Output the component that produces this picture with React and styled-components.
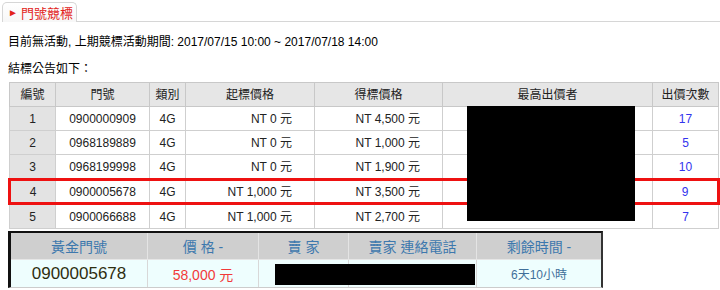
import React from 'react';
import styled, { createGlobalStyle } from 'styled-components';

const GlobalStyle = createGlobalStyle`
  body {
    margin: 0;
    background: #fff;
    font-family: "Liberation Sans", "Noto Sans CJK TC", sans-serif;
    font-size: 12px;
    color: #000;
  }
`;

const rows = [
  { no: 1, phone: '0900000909', type: '4G', start: 'NT 0 元', win: 'NT 4,500 元', bids: 17 },
  { no: 2, phone: '0968189889', type: '4G', start: 'NT 0 元', win: 'NT 1,000 元', bids: 5 },
  { no: 3, phone: '0968199998', type: '4G', start: 'NT 0 元', win: 'NT 1,900 元', bids: 10 },
  { no: 4, phone: '0900005678', type: '4G', start: 'NT 1,000 元', win: 'NT 3,500 元', bids: 9, hot: true },
  { no: 5, phone: '0900066688', type: '4G', start: 'NT 1,000 元', win: 'NT 2,700 元', bids: 7 },
];

function App() {
  return (
    <Page>
      <GlobalStyle />
      <TabBar>
        <Tab>
          <Arrow>►</Arrow>門號競標
        </Tab>
        <TabLine />
      </TabBar>
      <Content>
        <Info>目前無活動, 上期競標活動期間: 2017/07/15 10:00 ~ 2017/07/18 14:00</Info>
        <Info $last>結標公告如下：</Info>
        <TableWrap>
          <Table>
            <colgroup>
              <col style={{ width: 46 }} />
              <col style={{ width: 94 }} />
              <col style={{ width: 36 }} />
              <col style={{ width: 129 }} />
              <col style={{ width: 128 }} />
              <col style={{ width: 210 }} />
              <col style={{ width: 66 }} />
            </colgroup>
            <thead>
              <tr>
                <Th>編號</Th>
                <Th>門號</Th>
                <Th>類別</Th>
                <Th>起標價格</Th>
                <Th>得標價格</Th>
                <Th>最高出價者</Th>
                <Th>出價次數</Th>
              </tr>
            </thead>
            <tbody>
              {rows.map((r) => (
                <tr key={r.no}>
                  <NoCell $hot={r.hot}>{r.no}</NoCell>
                  <Td $hot={r.hot}>{r.phone}</Td>
                  <Td $hot={r.hot}>{r.type}</Td>
                  <Td $hot={r.hot} $right>{r.start}</Td>
                  <Td $hot={r.hot} $right>{r.win}</Td>
                  <Td $hot={r.hot} />
                  <Td $hot={r.hot} $last><Bids>{r.bids}</Bids></Td>
                </tr>
              ))}
            </tbody>
          </Table>
          <Redact />
        </TableWrap>
        <Panel>
          <PanelRow $head>
            <PanelHead>黃金門號</PanelHead>
            <PanelHead>價 格 -</PanelHead>
            <PanelHead>賣 家</PanelHead>
            <PanelHead>賣家 連絡電話</PanelHead>
            <PanelHead>剩餘時間 -</PanelHead>
          </PanelRow>
          <PanelRow>
            <PanelCell $size={17} $color="#2e2e10">0900005678</PanelCell>
            <PanelCell $size={14} $color="#f23a3a">58,000 元</PanelCell>
            <PanelCell />
            <PanelCell />
            <PanelCell $size={12} $color="#3f6f9a">6天10小時</PanelCell>
          </PanelRow>
          <PanelRedact />
        </Panel>
      </Content>
    </Page>
  );
}

export default App;

const Page = styled.div`
  width: 720px;
  height: 290px;
  overflow: hidden;
  padding-top: 2px;
  box-sizing: border-box;
`;

const TabBar = styled.div`
  display: flex;
  align-items: flex-end;
  padding-left: 2px;
`;

const Tab = styled.div`
  width: 75px;
  height: 20px;
  box-sizing: border-box;
  border: 1px solid #d6d6d6;
  border-bottom: none;
  border-radius: 5px 5px 0 0;
  background: linear-gradient(#ffffff, #f7f7f7);
  color: #e2231a;
  font-size: 13px;
  display: flex;
  align-items: center;
  padding-left: 5px;
  gap: 3px;
`;

const Arrow = styled.span`
  font-size: 10px;
  color: #e2231a;
`;

const TabLine = styled.div`
  flex: 1;
  border-bottom: 1px solid #d6d6d6;
`;

const Content = styled.div`
  padding-left: 8px;
`;

const Info = styled.div`
  height: ${(p) => (p.$last ? '33px' : '27px')};
  line-height: 14px;
  padding-top: 13px;
  box-sizing: border-box;
`;

const TableWrap = styled.div`
  position: relative;
  width: 710px;
`;

const Table = styled.table`
  border-collapse: collapse;
  table-layout: fixed;
  width: 710px;
  line-height: 14px;
`;

const Th = styled.th`
  height: 23px;
  padding: 0;
  background: #e6e6e6;
  border: 1px solid #c8c8c8;
  font-weight: normal;
  font-size: 12px;
  color: #222;
  text-align: center;
`;

const Td = styled.td`
  height: ${(p) => (p.$hot ? '21px' : '23px')};
  padding: 0;
  padding-right: ${(p) => (p.$right ? '22px' : '0')};
  border: 1px solid #cfcfcf;
  text-align: ${(p) => (p.$right ? 'right' : 'center')};
  color: #222;
  ${(p) => p.$hot && 'border-top: 3px solid #ee1111; border-bottom: 3px solid #ee1111;'}
  ${(p) => p.$hot && p.$last && 'border-right: 3px solid #ee1111;'}
`;

const NoCell = styled(Td)`
  background: #e3e3e3;
  ${(p) => p.$hot && 'border-left: 3px solid #ee1111;'}
`;

const Bids = styled.span`
  color: #3333ee;
`;

const Redact = styled.div`
  position: absolute;
  left: 459px;
  top: 24px;
  width: 168px;
  height: 115px;
  background: #000;
`;

const Panel = styled.div`
  position: relative;
  margin-top: 2px;
  width: 595px;
  box-sizing: border-box;
  border-top: 2px solid #111;
  border-left: 3px solid #111;
  border-right: 2px solid #333;
  border-bottom: 1px solid #ccc;
`;

const PanelRow = styled.div`
  display: grid;
  grid-template-columns: 137px 111px 90px 128px 1fr;
  height: ${(p) => (p.$head ? '26px' : '27px')};
  background: ${(p) => (p.$head ? '#cfcfcf' : '#eefefe')};
  border-top: ${(p) => (p.$head ? 'none' : '1px solid #e6e6e6')};
`;

const PanelHead = styled.div`
  display: flex;
  align-items: center;
  justify-content: center;
  color: #3d78ad;
  font-size: 14px;
  border-right: 1px solid #e4e4e4;
  &:last-child {
    border-right: none;
  }
`;

const PanelCell = styled.div`
  display: flex;
  align-items: center;
  justify-content: center;
  font-size: ${(p) => p.$size || 12}px;
  color: ${(p) => p.$color || '#000'};
  border-right: 1px solid #d8d8d8;
  &:last-child {
    border-right: none;
  }
`;

const PanelRedact = styled.div`
  position: absolute;
  left: 264px;
  top: 31px;
  width: 200px;
  height: 21px;
  background: #000;
`;
